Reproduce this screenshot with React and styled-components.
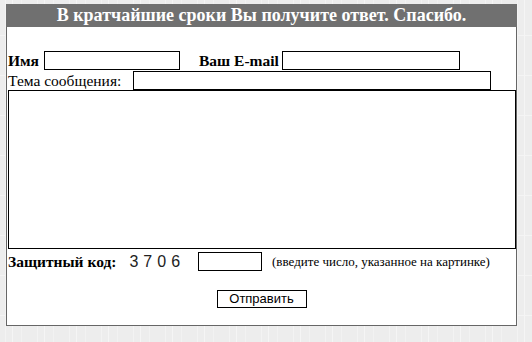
import React from "react";
import styled, { createGlobalStyle } from "styled-components";

const Global = createGlobalStyle`
  html, body { margin: 0; padding: 0; }
  body {
    width: 532px;
    height: 342px;
    overflow: hidden;
    background-color: #ededed;
    background-image:
      repeating-linear-gradient(90deg, transparent 0 5px, #f3f3f3 5px 6px, transparent 6px 12px, #f5f5f5 12px 13px, transparent 13px 21px, #f2f2f2 21px 22px, transparent 22px 32px),
      repeating-linear-gradient(0deg, transparent 0 26px, #f4f4f4 26px 27px, transparent 27px 40px);
    font-family: "Liberation Serif", "Times New Roman", serif;
  }
`;

const Panel = styled.div`
  box-sizing: border-box;
  margin: 4px 0 0 6px;
  width: 511px;
  height: 322px;
  background: #fff;
  border: 1px solid #666;
  border-top: none;
  display: flex;
  flex-direction: column;
`;

const Header = styled.div`
  margin: 0 -1px;
  height: 23px;
  background: #707070;
  color: #fff;
  font-weight: bold;
  font-size: 18px;
  line-height: 23px;
  text-align: center;
`;

const Form = styled.form`
  display: flex;
  flex-direction: column;
  padding: 24px 0 0 1px;
`;

const Row = styled.div`
  display: flex;
  align-items: center;
  height: 19px;
  margin-top: ${(p) => p.$mt || 0}px;
`;

const Label = styled.span`
  font-size: 15.5px;
  font-weight: ${(p) => (p.$bold ? "bold" : "normal")};
  color: #000;
  margin-left: ${(p) => p.$ml || 0}px;
  margin-right: ${(p) => p.$mr ?? 4}px;
  white-space: nowrap;
`;

const Field = styled.input`
  box-sizing: border-box;
  width: ${(p) => p.$w}px;
  height: 19px;
  border: 1px solid #000;
  background: #fff;
  padding: 0 2px;
  margin: 0 0 0 ${(p) => p.$ml || 0}px;
  outline: none;
`;

const Area = styled.textarea`
  box-sizing: border-box;
  display: block;
  width: 508px;
  height: 159px;
  margin: 0;
  border: 1px solid #000;
  resize: none;
  outline: none;
  background: #fff;
`;

const Code = styled.span`
  font-family: "Liberation Sans", Arial, sans-serif;
  font-size: 16px;
  letter-spacing: 5px;
  color: #222;
  margin: 0 13px 0 13px;
`;

const Hint = styled.span`
  font-size: 13px;
  color: #000;
  margin-left: 10px;
  white-space: nowrap;
`;

const ButtonRow = styled.div`
  display: flex;
  justify-content: center;
  margin-top: 19px;
`;

const Button = styled.button`
  box-sizing: border-box;
  width: 90px;
  height: 18px;
  border: 1px solid #000;
  background: #fff;
  font-family: "Liberation Sans", Tahoma, Arial, sans-serif;
  font-size: 13px;
  line-height: 16px;
  padding: 0;
  color: #000;
  margin-left: -1px;
`;

export default function App() {
  return (
    <>
      <Global />
      <Panel>
        <Header>В кратчайшие сроки Вы получите ответ. Спасибо.</Header>
        <Form onSubmit={(e) => e.preventDefault()}>
          <Row>
            <Label $bold>Имя</Label>
            <Field $w={136} $ml={1} />
            <Label $bold $ml={19}>Ваш E-mail</Label>
            <Field $w={178} $ml={-1} />
          </Row>
          <Row $mt={1}>
            <Label $mr={12}>Тема сообщения:</Label>
            <Field $w={358} />
          </Row>
          <Area />
          <Row $mt={3}>
            <Label $bold $mr={0}>Защитный код:</Label>
            <Code>3706</Code>
            <Field $w={64} />
            <Hint>(введите число, указанное на картинке)</Hint>
          </Row>
          <ButtonRow>
            <Button type="button">Отправить</Button>
          </ButtonRow>
        </Form>
      </Panel>
    </>
  );
}
